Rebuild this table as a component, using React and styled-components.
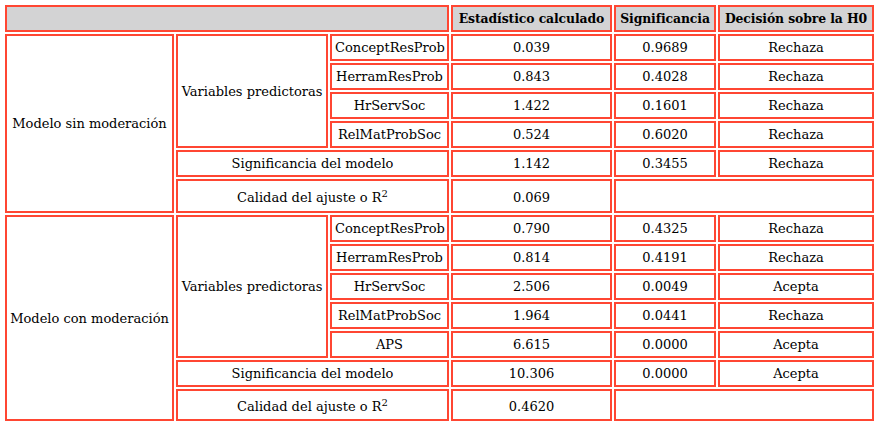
import React from "react";
import styled, { createGlobalStyle } from "styled-components";

const Global = createGlobalStyle`
  body {
    margin: 0;
    background: #ffffff;
    font-family: "DejaVu Serif", "Liberation Serif", serif;
    font-size: 13px;
    color: #000000;
  }
`;

const Table = styled.table`
  margin: 3px;
  border-collapse: separate;
  border-spacing: 2px;
  table-layout: fixed;
  width: 873px;
`;

const Cell = styled.td`
  border: 2px solid #ff4632;
  padding: 0 3px;
  height: 23px;
  text-align: center;
  vertical-align: middle;
  white-space: nowrap;
  line-height: 15px;
  background: ${(p) => (p.$gray ? "#d3d3d4" : "#ffffff")};
  font-weight: ${(p) => (p.$bold ? "bold" : "normal")};
  font-size: ${(p) => (p.$bold ? "12.4px" : "13px")};
  ${(p) => p.$bold && "padding: 0 1px; letter-spacing: -0.1px;"}
`;

const TallCell = styled(Cell)`
  height: ${(p) => p.$h || 28}px;
  padding-top: 2px;
`;

const Sup = styled.sup`
  font-size: 10px;
  line-height: 0;
`;

const groups = [
  {
    name: "Modelo sin moderación",
    vars: [
      ["ConceptResProb", "0.039", "0.9689", "Rechaza"],
      ["HerramResProb", "0.843", "0.4028", "Rechaza"],
      ["HrServSoc", "1.422", "0.1601", "Rechaza"],
      ["RelMatProbSoc", "0.524", "0.6020", "Rechaza"],
    ],
    sig: ["1.142", "0.3455", "Rechaza"],
    r2: "0.069",
    h: 28,
  },
  {
    name: "Modelo con moderación",
    vars: [
      ["ConceptResProb", "0.790", "0.4325", "Rechaza"],
      ["HerramResProb", "0.814", "0.4191", "Rechaza"],
      ["HrServSoc", "2.506", "0.0049", "Acepta"],
      ["RelMatProbSoc", "1.964", "0.0441", "Rechaza"],
      ["APS", "6.615", "0.0000", "Acepta"],
    ],
    sig: ["10.306", "0.0000", "Acepta"],
    r2: "0.4620",
    h: 26,
  },
];

function Group({ g }) {
  const rows = g.vars.length + 2;
  return (
    <>
      {g.vars.map((v, i) => (
        <tr key={v[0]}>
          {i === 0 && <Cell rowSpan={rows}>{g.name}</Cell>}
          {i === 0 && <Cell rowSpan={g.vars.length}>Variables predictoras</Cell>}
          <Cell>{v[0]}</Cell>
          <Cell>{v[1]}</Cell>
          <Cell>{v[2]}</Cell>
          <Cell>{v[3]}</Cell>
        </tr>
      ))}
      <tr>
        <Cell colSpan={2}>Significancia del modelo</Cell>
        <Cell>{g.sig[0]}</Cell>
        <Cell>{g.sig[1]}</Cell>
        <Cell>{g.sig[2]}</Cell>
      </tr>
      <tr>
        <TallCell colSpan={2} $h={g.h}>
          Calidad del ajuste o R<Sup>2</Sup>
        </TallCell>
        <TallCell $h={g.h}>{g.r2}</TallCell>
        <TallCell colSpan={2} $h={g.h} />
      </tr>
    </>
  );
}

export default function App() {
  return (
    <>
      <Global />
      <Table>
        <colgroup>
          <col style={{ width: 169 }} />
          <col style={{ width: 152 }} />
          <col style={{ width: 119 }} />
          <col style={{ width: 161 }} />
          <col style={{ width: 102 }} />
          <col style={{ width: 156 }} />
        </colgroup>
        <tbody>
          <tr>
            <Cell colSpan={3} $gray />
            <Cell $gray $bold>Estadístico calculado</Cell>
            <Cell $gray $bold>Significancia</Cell>
            <Cell $gray $bold>Decisión sobre la H0</Cell>
          </tr>
          {groups.map((g) => (
            <Group key={g.name} g={g} />
          ))}
        </tbody>
      </Table>
    </>
  );
}
